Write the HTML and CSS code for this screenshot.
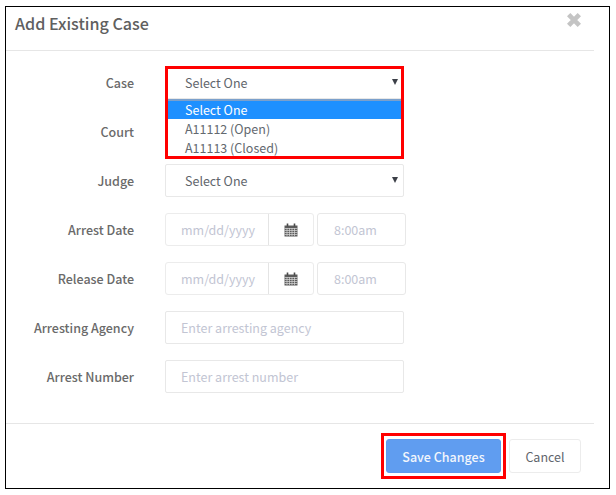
FILE: index.html
```html
<!DOCTYPE html>
<html lang="en">
<head>
<meta charset="utf-8">
<title>Add Existing Case</title>
<link rel="stylesheet" href="styles.css">
</head>
<body>
<div class="modal">
  <header class="modal-head">
    <h1 class="title">Add Existing Case</h1>
    <svg class="close" viewBox="0 0 15 15" aria-label="Close"><path d="M2.500 2.500 12.500 12.500M12.500 2.500 2.500 12.500"/></svg>
  </header>
  <form class="form">
    <div class="row">
      <label class="label">Case</label>
      <div class="control select-wrap">
        <div class="field select"><span>Select One</span><i class="caret"></i></div>
        <div class="highlight">
          <ul class="options">
            <li class="option active">Select One</li>
            <li class="option">A11112 (Open)</li>
            <li class="option">A11113 (Closed)</li>
          </ul>
        </div>
      </div>
    </div>
    <div class="row">
      <label class="label">Court</label>
      <div class="control"><div class="field select"><span class="covered">Select One</span><i class="caret"></i></div></div>
    </div>
    <div class="row">
      <label class="label">Judge</label>
      <div class="control"><div class="field select"><span>Select One</span><i class="caret"></i></div></div>
    </div>
    <div class="row">
      <label class="label">Arrest Date</label>
      <div class="datetime">
        <div class="date-group">
          <div class="date-input">mm/dd/yyyy</div>
          <div class="date-btn"><svg class="cal" viewBox="0 0 14 14"><path class="cal-body" d="M.5 2.500h13v11H.5z"/><path class="cal-grid" d="M.5 5.500h13M.5 7.500h13M.5 9.500h13M.5 11.500h13M3 5v8M5.500 5v8M8 5v8M10.500 5v8"/><path class="cal-ring" d="M3.500 .5v3M10.500 .5v3"/></svg></div>
        </div>
        <div class="time-input">8:00am</div>
      </div>
    </div>
    <div class="row">
      <label class="label">Release Date</label>
      <div class="datetime">
        <div class="date-group">
          <div class="date-input">mm/dd/yyyy</div>
          <div class="date-btn"><svg class="cal" viewBox="0 0 14 14"><path class="cal-body" d="M.5 2.500h13v11H.5z"/><path class="cal-grid" d="M.5 5.500h13M.5 7.500h13M.5 9.500h13M.5 11.500h13M3 5v8M5.500 5v8M8 5v8M10.500 5v8"/><path class="cal-ring" d="M3.500 .5v3M10.500 .5v3"/></svg></div>
        </div>
        <div class="time-input">8:00am</div>
      </div>
    </div>
    <div class="row">
      <label class="label">Arresting Agency</label>
      <div class="control"><div class="field placeholder">Enter arresting agency</div></div>
    </div>
    <div class="row">
      <label class="label">Arrest Number</label>
      <div class="control"><div class="field placeholder">Enter arrest number</div></div>
    </div>
  </form>
  <footer class="modal-foot">
    <div class="save-mark"><button class="btn btn-save" type="button">Save Changes</button></div>
    <button class="btn btn-cancel" type="button">Cancel</button>
  </footer>
</div>
</body>
</html>
```
FILE: styles.css
```css
* { box-sizing: border-box; }
html, body { margin: 0; padding: 0; background: #fff; }
body {
  width: 616px;
  height: 495px;
  padding: 6px 6px 6px 5px;
  font-family: "Noto Sans CJK SC", "Source Sans Pro", "Noto Sans", sans-serif;
  font-size: 12.5px;
  color: #636c72;
  overflow: hidden;
}
.modal {
  width: 605px;
  height: 483px;
  border: 1px solid #000;
  background: #fff;
  display: flex;
  flex-direction: column;
}
.modal-head {
  width: 588px;
  height: 44px;
  border-bottom: 1px solid #e6e6e6;
  display: flex;
  justify-content: space-between;
  padding-left: 9px;
  flex: none;
}
.title {
  margin: 4px 0 0;
  font-size: 16.1px;
  line-height: 24px;
  font-weight: 500;
  color: #606060;
}
.close {
  width: 16px;
  height: 16px;
  margin: 5px 12px 0 0;
  fill: none;
  stroke: #c4c4c4;
  stroke-width: 4.4;
}
.form {
  flex: none;
  height: 372px;
  padding-top: 15px;
  display: flex;
  flex-direction: column;
  gap: 16px;
}
.row {
  display: flex;
  height: 33px;
  align-items: center;
}
.label {
  width: 128px;
  text-align: right;
  font-weight: 500;
  color: #6a6a6a;
  line-height: 33px;
  flex: none;
}
.control {
  margin-left: 31px;
  width: 239px;
  position: relative;
}
.select-wrap { z-index: 2; }
.covered { visibility: hidden; }
.field {
  height: 33px;
  border: 1px solid #e8e8e8;
  border-radius: 2px;
  padding: 0 15px;
  line-height: 31px;
  background: #fff;
}
.select {
  display: flex;
  justify-content: space-between;
  align-items: center;
  padding-right: 5px;
  padding-left: 19px;
  color: #5f656c;
}
.caret {
  width: 0;
  height: 0;
  border-left: 3.5px solid transparent;
  border-right: 3.5px solid transparent;
  border-top: 6px solid #3c4048;
  margin-top: -2px;
}
.placeholder { color: #c2c5d3; }
.highlight {
  position: absolute;
  left: 0;
  top: 0;
  width: 239px;
  height: 93px;
  border: 3px solid #f00;
  padding-top: 30px;
  pointer-events: none;
}
.options {
  list-style: none;
  margin: 0;
  padding: 0;
  height: 57px;
  background: #fff;
  border-top: 2px solid #7ba0cc;
}
.option {
  height: 19px;
  line-height: 19px;
  padding-left: 17px;
  color: #63696f;
}
.option.active {
  height: 18px;
  line-height: 18px;
  background: #1e90ff;
  color: #fff;
}
.datetime {
  margin-left: 31px;
  display: flex;
  gap: 3px;
}
.date-group {
  width: 149px;
  height: 33px;
  display: flex;
  border: 1px solid #ececec;
  border-radius: 3px;
}
.date-input {
  width: 103px;
  border-right: 1px solid #e4e4e4;
  padding-left: 15px;
  line-height: 31px;
  color: #c2c5d3;
}
.date-btn {
  flex: 1;
  display: flex;
  align-items: center;
  justify-content: center;
}
.cal { width: 14px; height: 14px; margin-left: -1px; }
.cal-body { fill: #5c5c5c; }
.cal-grid { fill: none; stroke: #d8d8d8; stroke-width: 0.7; }
.cal-ring { fill: none; stroke: #4a4a4a; stroke-width: 1.6; }
.time-input {
  width: 89px;
  height: 33px;
  border: 1px solid #e8e8e8;
  border-radius: 3px;
  padding-left: 16px;
  line-height: 31px;
  color: #c2c5d3;
}
.modal-foot {
  width: 588px;
  flex: 1;
  border-top: 1px solid #e6e6e6;
  display: flex;
  justify-content: flex-end;
  align-items: flex-start;
  padding: 9px 13px 0 0;
  gap: 3px;
}
.save-mark {
  border: 3px solid #f00;
  width: 125px;
  height: 46px;
  padding: 3px 2px;
}
.btn {
  font: inherit;
  height: 34px;
  border-radius: 3px;
  cursor: pointer;
}
.btn-save {
  width: 115px;
  background: #609df0;
  border: 1px solid #5d9aec;
  color: #f2f6fc;
  font-weight: 500;
}
.btn-cancel {
  width: 72px;
  margin-top: 6px;
  background: #fff;
  border: 1px solid #ececec;
  color: #5f656c;
}
```
